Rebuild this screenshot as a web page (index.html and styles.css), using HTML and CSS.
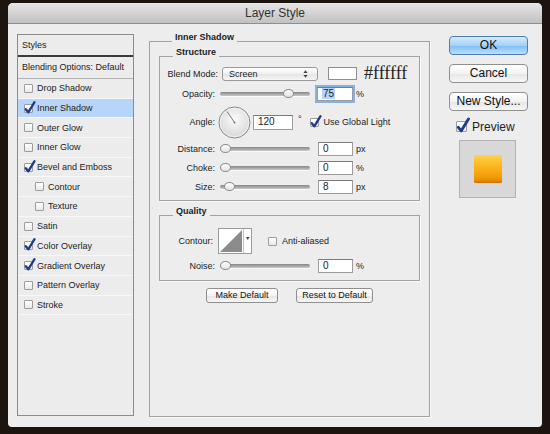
FILE: index.html
```html
<!DOCTYPE html>
<html lang="en">
<head>
    <meta charset="UTF-8">
    <title>Layer Style</title>
    <link rel="stylesheet" href="styles.css">
</head>
<body>
<div class="window">
    <div class="titlebar">Layer Style</div>

    <div class="content">
        <!-- left list of effects -->
        <div class="styles-panel">
            <div class="styles-head">Styles</div>
            <div class="blend-row">Blending Options: Default</div>
            <div class="fx"><span class="cb"></span>Drop Shadow</div>
            <div class="fx active"><span class="cb on"><svg viewBox="0 0 10 10"><path d="M1.8 5.2 L4.3 8.3 L10.5 -1.8"/></svg></span>Inner Shadow</div>
            <div class="fx"><span class="cb"></span>Outer Glow</div>
            <div class="fx"><span class="cb"></span>Inner Glow</div>
            <div class="fx"><span class="cb on"><svg viewBox="0 0 10 10"><path d="M1.8 5.2 L4.3 8.3 L10.5 -1.8"/></svg></span>Bevel and Emboss</div>
            <div class="fx sub"><span class="cb"></span>Contour</div>
            <div class="fx sub"><span class="cb"></span>Texture</div>
            <div class="fx"><span class="cb"></span>Satin</div>
            <div class="fx"><span class="cb on"><svg viewBox="0 0 10 10"><path d="M1.8 5.2 L4.3 8.3 L10.5 -1.8"/></svg></span>Color Overlay</div>
            <div class="fx"><span class="cb on"><svg viewBox="0 0 10 10"><path d="M1.8 5.2 L4.3 8.3 L10.5 -1.8"/></svg></span>Gradient Overlay</div>
            <div class="fx"><span class="cb"></span>Pattern Overlay</div>
            <div class="fx"><span class="cb"></span>Stroke</div>
        </div>

        <!-- effect settings -->
        <div class="effect">
            <div class="group outer">
                <div class="group-title">Inner Shadow</div>

                <div class="group structure">
                    <div class="group-title">Structure</div>

                    <div class="row blend">
                        <span class="label wide">Blend Mode:</span>
                        <div class="select">Screen
                            <svg class="updown" viewBox="0 0 6 9"><path d="M3 0 L5.5 3.3 H0.5 Z M3 9 L5.5 5.7 H0.5 Z"/></svg>
                        </div>
                        <span class="swatch"></span>
                        <span class="hex">#ffffff</span>
                    </div>

                    <div class="row opacity">
                        <span class="label">Opacity:</span>
                        <div class="slider"><span class="knob" style="left: 68px"></span></div>
                        <div class="field focus"><span class="sel">75</span></div>
                        <span class="unit">%</span>
                    </div>

                    <div class="row angle">
                        <span class="label">Angle:</span>
                        <svg class="dial" viewBox="0 0 33 33">
                            <defs>
                                <radialGradient id="dialFill" cx="50%" cy="40%" r="60%">
                                    <stop offset="0" stop-color="#fbfbfb"/>
                                    <stop offset="1" stop-color="#d8d8d8"/>
                                </radialGradient>
                            </defs>
                            <circle cx="16.5" cy="16.5" r="15.5" fill="url(#dialFill)" stroke="#858585"/>
                            <circle cx="16.5" cy="16.5" r="14.3" fill="none" stroke="#f6f6f6" stroke-width="0.8"/>
                            <line x1="16.5" y1="16.5" x2="9" y2="5.5" stroke="#666" stroke-width="0.9"/>
                            <circle cx="16.5" cy="16.5" r="1" fill="#777"/>
                        </svg>
                        <div class="field angle-field">120</div>
                        <span class="deg">°</span>
                        <span class="cb on big-gap"><svg viewBox="0 0 10 10"><path d="M1.8 5.2 L4.3 8.3 L10.5 -1.8"/></svg></span>
                        <span class="check-text">Use Global Light</span>
                    </div>

                    <div class="row distance">
                        <span class="label">Distance:</span>
                        <div class="slider"><span class="knob" style="left: 5px"></span></div>
                        <div class="field">0</div>
                        <span class="unit">px</span>
                    </div>

                    <div class="row choke">
                        <span class="label">Choke:</span>
                        <div class="slider"><span class="knob" style="left: 5px"></span></div>
                        <div class="field">0</div>
                        <span class="unit">%</span>
                    </div>

                    <div class="row size">
                        <span class="label">Size:</span>
                        <div class="slider"><span class="knob" style="left: 9px"></span></div>
                        <div class="field">8</div>
                        <span class="unit">px</span>
                    </div>
                </div>

                <div class="group quality">
                    <div class="group-title">Quality</div>

                    <div class="row contour">
                        <span class="label short">Contour:</span>
                        <svg class="contour-box" viewBox="0 0 34 26">
                            <rect x="0.5" y="0.5" width="33" height="25" fill="#fff" stroke="#9a9a9a"/>
                            <path d="M2 24 L24 2 V24 Z" fill="#8c8c8c"/>
                            <line x1="25.5" y1="1" x2="25.5" y2="25" stroke="#c4c4c4"/>
                            <path d="M28 9 H31.5 L29.75 12 Z" fill="#444"/>
                        </svg>
                        <span class="cb aa"></span>
                        <span class="check-text">Anti-aliased</span>
                    </div>

                    <div class="row noise">
                        <span class="label">Noise:</span>
                        <div class="slider"><span class="knob" style="left: 5px"></span></div>
                        <div class="field">0</div>
                        <span class="unit">%</span>
                    </div>
                </div>

                <div class="defaults">
                    <button class="btn small make">Make Default</button>
                    <button class="btn small reset">Reset to Default</button>
                </div>
            </div>
        </div>

        <!-- dialog buttons -->
        <div class="actions">
            <button class="btn default">OK</button>
            <button class="btn">Cancel</button>
            <button class="btn">New Style...</button>
            <div class="preview-row">
                <span class="cb on large"><svg viewBox="0 0 10 10"><path d="M1.8 5.2 L4.3 8.3 L10.5 -1.8"/></svg></span>
                <span>Preview</span>
            </div>
            <div class="preview">
                <div class="thumb"></div>
            </div>
        </div>
    </div>
</div>
</body>
</html>
```

FILE: styles.css
```css
body {
    margin: 0;
    background-color: #1c140e;
    font-family: 'Liberation Sans', Arial, sans-serif;
    font-size: 9px;
    color: #222;
}
.window {
    margin: 3px 8px 0;
    width: 534px;
    height: 424px;
    background-color: #ededed;
    border-radius: 5px 5px 4px 4px;
    overflow: hidden;
    display: flex;
    flex-direction: column;
}
.titlebar {
    height: 20px;
    line-height: 21px;
    text-align: center;
    font-size: 12px;
    color: #333;
    border-bottom: 1px solid #8e8e8e;
    background: linear-gradient(#e6e6e6, #c1c1c1);
}
.content {
    display: flex;
    align-items: flex-start;
    padding: 10px 0 0 9px;
}

/* left list */
.styles-panel {
    width: 115px;
    height: 380px;
    margin-right: 15px;
    border: 1px solid #8a8a8a;
    background-color: #ececec;
}
.styles-head {
    height: 20px;
    line-height: 20px;
    padding-left: 4px;
    border-bottom: 2px solid #3a3a3a;
}
.blend-row {
    height: 21px;
    line-height: 21px;
    padding-left: 4px;
    border-bottom: 1px solid #b2b2b2;
}
.fx {
    box-sizing: border-box;
    height: 19.7px;
    display: flex;
    align-items: center;
    padding-left: 6px;
    border-bottom: 1px solid #f8f8f8;
}
.fx .cb {
    margin-right: 4px;
}
.fx.sub {
    padding-left: 17px;
}
.fx.active {
    background-color: #b7d5f8;
}

/* checkboxes */
.cb {
    position: relative;
    flex: none;
    box-sizing: border-box;
    width: 9px;
    height: 9px;
    border: 1px solid #9d9d9d;
    border-radius: 1px;
    background: linear-gradient(#fff, #e9e9e9);
}
.cb svg {
    position: absolute;
    left: -1px;
    top: -1px;
    width: 10px;
    height: 10px;
    overflow: visible;
}
.cb svg path {
    fill: none;
    stroke: #1d3a8c;
    stroke-width: 2.3;
    stroke-linecap: round;
    stroke-linejoin: round;
}
.cb.large {
    width: 11px;
    height: 11px;
}
.cb.large svg {
    width: 12px;
    height: 12px;
}

/* group boxes */
.effect {
    width: 281px;
    margin-right: 19px;
    padding-top: 7px;
}
.group {
    border: 1px solid #a2a2a2;
    box-shadow: 1px 1px 0 #fafafa;
}
.group.outer {
    height: 374px;
    padding: 0 9px;
}
.group-title {
    display: table;
    margin: -10px 0 0 13px;
    padding: 0 3px;
    line-height: 10px;
    font-weight: bold;
    background-color: #ededed;
}
.structure {
    margin-top: 14px;
    padding-bottom: 6px;
}
.quality {
    margin-top: 14px;
    padding-bottom: 7px;
}

/* rows */
.row {
    display: flex;
    align-items: center;
    height: 14px;
}
.label {
    width: 55px;
    text-align: right;
    flex: none;
}
.label.wide {
    width: 58px;
}
.label.short {
    width: 53px;
}
.blend {
    height: 15px;
    margin-top: 9px;
}
.opacity {
    margin-top: 6px;
}
.angle {
    height: 32px;
    margin-top: 5px;
}
.distance {
    margin-top: 4px;
}
.choke,
.size {
    margin-top: 5px;
}
.contour {
    height: 26px;
    margin-top: 12px;
}
.noise {
    margin-top: 5px;
}

.select {
    position: relative;
    box-sizing: border-box;
    width: 96px;
    height: 14px;
    margin-left: 4px;
    padding-left: 6px;
    line-height: 12px;
    border: 1px solid #9a9a9a;
    border-radius: 3px;
    background: linear-gradient(#fff, #f0f0f0 50%, #e4e4e4 51%, #f6f6f6);
}
.updown {
    position: absolute;
    right: 9px;
    top: 2px;
    width: 5px;
    height: 8px;
    fill: #444;
}
.swatch {
    width: 27px;
    height: 11px;
    margin-left: 10px;
    border: 1px solid #8e8e8e;
    background-color: #fff;
}
.hex {
    margin-left: 7px;
    font-family: 'Liberation Serif', 'Times New Roman', serif;
    font-size: 18px;
    line-height: 15px;
    color: #222;
}

.slider {
    position: relative;
    width: 90px;
    height: 4px;
    margin-left: 5px;
    border-radius: 2px;
    background: linear-gradient(#858585, #c8c8c8);
    box-shadow: 0 1px 0 #fbfbfb;
}
.knob {
    position: absolute;
    top: -3px;
    width: 11px;
    height: 9px;
    margin-left: -5px;
    box-sizing: border-box;
    border: 1px solid #8d8d8d;
    border-radius: 50%;
    background: linear-gradient(#fff, #e2e2e2);
}

.field {
    box-sizing: border-box;
    width: 36px;
    height: 14px;
    margin-left: 7px;
    padding-left: 4px;
    line-height: 12px;
    font-size: 10px;
    border: 1px solid #9c9c9c;
    border-top-color: #7a7a7a;
    background-color: #fff;
}
.distance .field,
.choke .field,
.size .field,
.noise .field {
    width: 35px;
    margin-left: 8px;
}
.field.focus {
    box-shadow: 0 0 0 2px #86b2e0;
}
.sel {
    background-color: #b4d4fb;
    padding: 0 1px;
}
.unit {
    margin-left: 3px;
}

.dial {
    width: 33px;
    height: 33px;
    margin-left: 3px;
}
.angle-field {
    width: 40px;
    height: 15px;
    margin-left: 2px;
}
.deg {
    margin-left: 5px;
    align-self: flex-start;
    margin-top: 8px;
}
.big-gap {
    margin-left: 8px;
}
.check-text {
    margin-left: 5px;
}

.contour-box {
    width: 34px;
    height: 26px;
    margin-left: 5px;
}
.aa {
    margin-left: 16px;
}

.defaults {
    display: flex;
    justify-content: center;
    gap: 18px;
    margin-top: 7px;
}

/* buttons */
.btn {
    display: block;
    box-sizing: border-box;
    width: 79px;
    height: 19px;
    padding: 0;
    font-family: 'Liberation Sans', Arial, sans-serif;
    font-size: 12px;
    line-height: 17px;
    color: #111;
    border: 1px solid #8f8f8f;
    border-radius: 4px;
    background: linear-gradient(#fff, #f3f3f3 50%, #e5e5e5 51%, #f7f7f7);
}
.btn.default {
    border-color: #4e7db3;
    background: linear-gradient(#d6ecfd, #a3d0f6 50%, #7dbcf1 51%, #b9e1ff);
}
.btn.small {
    height: 15px;
    font-size: 9px;
    line-height: 13px;
    border-radius: 3px;
}
.btn.make {
    width: 72px;
}
.btn.reset {
    width: 77px;
}

.actions {
    width: 79px;
    padding-top: 2px;
}
.actions .btn {
    margin-bottom: 9px;
}
.preview-row {
    display: flex;
    align-items: center;
    height: 13px;
    margin-top: 1px;
    padding-left: 7px;
    font-size: 12px;
}
.preview-row span:last-child {
    margin-left: 5px;
}
.preview {
    display: flex;
    align-items: center;
    justify-content: center;
    box-sizing: border-box;
    width: 57px;
    height: 58px;
    margin: 7px 0 0 10px;
    border: 1px solid #b3b3b3;
    background-color: #d8d8d8;
}
.thumb {
    width: 28px;
    height: 28px;
    border-radius: 2px;
    background: linear-gradient(#ffd24a, #fbb318 45%, #f29a05 80%, #d47c00);
    box-shadow: inset 0 -1px 0 #c97300;
}
```
